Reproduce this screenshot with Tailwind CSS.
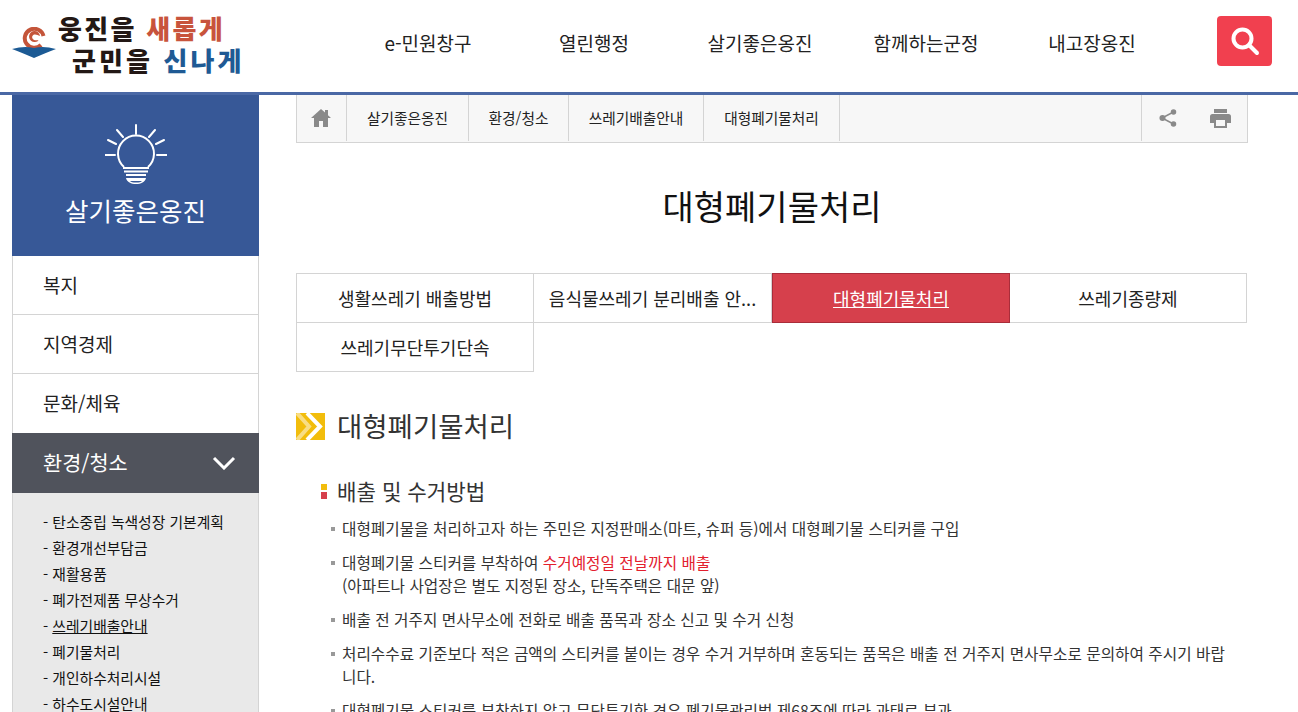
<!DOCTYPE html>
<html lang="ko">
<head>
<meta charset="utf-8">
<title>대형폐기물처리</title>
<script src="https://cdn.jsdelivr.net/npm/@tailwindcss/browser@4"></script>
</head>
<body class="h-[712px] overflow-hidden bg-white font-['Noto_Sans_CJK_KR','Noto_Sans',sans-serif] text-[#222]">

<!-- header -->
<header class="flex h-[95px] items-start border-b-[3px] border-[#4a68a5]">
  <a class="relative ml-[12px] block h-[92px] w-[240px] shrink-0">
    <svg class="absolute left-0 top-[27px]" width="44" height="32" viewBox="0 0 44 32">
      <path d="M29 18A9.500 9.500 0 1 1 31.500 9" fill="none" stroke="#c4553a" stroke-width="4"/>
      <path d="M28 9a5.500 5.500 0 1 0-5 6c2 0 3-1 3.500-2-2 .5-5 .5-6-1.500s.5-4 2.500-4 3 1 5 1.500z" fill="#c4553a"/>
      <path d="M0 22c8-2 14-3 22-1 8-2 14-1 22 1-8 3-15 6-22 9-7-3-14-6-22-9z" fill="#1c5a94"/>
    </svg>
    <div class="absolute left-[46px] top-[13px] whitespace-nowrap text-[26px] font-black leading-[30px] tracking-[2.300px] text-[#231815]">웅진을 <span class="text-[#c8543c]">새롭게</span></div>
    <div class="absolute left-[60px] top-[45px] whitespace-nowrap text-[26px] font-black leading-[30px] tracking-[3.100px] text-[#231815]">군민을 <span class="text-[#1f5a94]">신나게</span></div>
  </a>
  <nav class="ml-[93px] flex h-[87px] items-center text-[19px] text-[#222]">
    <a class="w-[166px] text-center">e-민원창구</a>
    <a class="w-[166px] text-center">열린행정</a>
    <a class="w-[166px] text-center">살기좋은옹진</a>
    <a class="w-[166px] text-center">함께하는군정</a>
    <a class="w-[166px] text-center">내고장옹진</a>
  </nav>
  <button class="ml-[42px] mt-[16px] flex h-[50px] w-[55px] items-center justify-center rounded-[4px] bg-[#f1404f]">
    <svg width="30" height="30" viewBox="0 0 30 30" fill="none" stroke="#fff" stroke-width="4"><circle cx="12.5" cy="12.5" r="9"/><path d="M19 19l8 8" stroke-linecap="round"/></svg>
  </button>
</header>

<div class="flex items-start">
  <!-- sidebar -->
  <aside class="ml-[12px] w-[247px] shrink-0">
    <div class="flex h-[161px] flex-col items-center bg-[#375897] pt-[28px] text-white">
      <svg width="62" height="62" viewBox="0 0 62 62" fill="none" stroke="#fff" stroke-width="2">
        <path d="M19 44a18 18 0 1 1 24 0"/>
        <path d="M31 2v9M12 7l6 7M50 7l-6 7M3 17l8 4M59 17l-8 4M0 32h10M52 32h10" stroke-linecap="round"/>
        <path d="M18 45h26M19 48.500h24"/>
        <path d="M21 52h20"/>
        <path d="M21 55h20c-1 4-5 6-10 6s-9-2-10-6z" fill="#fff" stroke="none"/>
        <path d="M25 58h12c-1 1-3 1.500-6 1.500s-5-.5-6-1.500z" fill="#375897" stroke="none"/>
      </svg>
      <div class="mt-[6px] text-[25.500px] leading-[38px]">살기좋은옹진</div>
    </div>
    <ul class="border-x border-[#d4d4d4] text-[19px] text-[#222]">
      <li class="flex h-[59px] items-center border-b border-[#d4d4d4] pl-[30px]">복지</li>
      <li class="flex h-[59px] items-center border-b border-[#d4d4d4] pl-[30px]">지역경제</li>
      <li class="flex h-[59px] items-center pl-[30px]">문화/체육</li>
    </ul>
    <div class="flex h-[60px] items-center justify-between bg-[#50535c] pl-[31px] pr-[23px] text-[20.800px] text-white">
      <span>환경/청소</span>
      <svg width="24" height="14" viewBox="0 0 24 14" fill="none" stroke="#fff" stroke-width="3"><path d="M2 2l10 10L22 2"/></svg>
    </div>
    <ul class="border-x border-[#d4d4d4] bg-[#e9e9e9] pl-[30px] pt-[16px] text-[14.800px] leading-[26px] text-[#111]">
      <li>- 탄소중립 녹색성장 기본계획</li>
      <li>- 환경개선부담금</li>
      <li>- 재활용품</li>
      <li>- 폐가전제품 무상수거</li>
      <li>- <span class="underline">쓰레기배출안내</span></li>
      <li>- 폐기물처리</li>
      <li>- 개인하수처리시설</li>
      <li>- 하수도시설안내</li>
    </ul>
  </aside>

  <!-- content -->
  <main class="ml-[37px] w-[952px] shrink-0">
    <div class="flex h-[48px] items-stretch border-x border-b border-[#d4d4d4] bg-[#f7f7f7] pb-[1px] text-[14.700px] text-[#222]">
      <a class="flex w-[50px] items-center justify-center border-r border-[#d4d4d4] pr-[2px]">
        <svg width="20" height="18" viewBox="0 0 20 18" fill="#8a8a8a"><path d="M10 0L0 9h3v9h5v-6h4v6h5V9h3l-3-2.700V1h-3v2.600z"/></svg>
      </a>
      <a class="flex w-[122px] items-center justify-center border-r border-[#d4d4d4]">살기좋은옹진</a>
      <a class="flex w-[100px] items-center justify-center border-r border-[#d4d4d4]">환경/청소</a>
      <a class="flex w-[135px] items-center justify-center border-r border-[#d4d4d4]">쓰레기배출안내</a>
      <a class="flex w-[136px] items-center justify-center border-r border-[#d4d4d4]">대형폐기물처리</a>
      <a class="ml-auto flex w-[53px] items-center justify-center border-l border-[#d4d4d4]">
        <svg width="18" height="18" viewBox="0 0 18 18" fill="#8a8a8a" stroke="#8a8a8a" stroke-width="1.500"><path d="M14.500 3L3 9l11.500 6" fill="none"/><circle cx="14.500" cy="3" r="2"/><circle cx="3.500" cy="9" r="2.300"/><circle cx="14.500" cy="15" r="2"/></svg>
      </a>
      <a class="flex w-[53px] items-center justify-center">
        <svg width="21" height="19" viewBox="0 0 21 19" fill="#8a8a8a"><path d="M4 0h13v4H4zM2.500 5h16A2.500 2.500 0 0 1 21 7.500V14h-4v5H4v-5H0V7.500A2.500 2.500 0 0 1 2.500 5zM6 11v6h9v-6z"/></svg>
      </a>
    </div>

    <h1 class="mt-[41px] h-[44px] text-center text-[34px] leading-[44px] text-[#111]">대형폐기물처리</h1>

    <div class="mt-[45px] grid w-[951px] grid-cols-[237px_238px_238px_237px] border-l border-t border-[#d4d4d4] text-[18px]">
      <a class="flex h-[49px] items-center justify-center border-b border-r border-[#d4d4d4]">생활쓰레기 배출방법</a>
      <a class="flex h-[49px] items-center justify-center whitespace-nowrap border-b border-r border-[#d4d4d4]">음식물쓰레기 분리배출 안...</a>
      <a class="-mt-px flex h-[50px] items-center justify-center border border-[#a92d3a] bg-[#d6404c] text-white underline">대형폐기물처리</a>
      <a class="flex h-[49px] items-center justify-center border-b border-r border-[#d4d4d4]">쓰레기종량제</a>
      <a class="flex h-[49px] items-center justify-center border-b border-r border-[#d4d4d4]">쓰레기무단투기단속</a>
    </div>

    <h2 class="mt-[32px] flex h-[44px] items-center text-[27.500px] text-[#333]">
      <svg class="mr-[12px] shrink-0" width="29" height="27" viewBox="0 0 29 27"><rect width="29" height="27" fill="#f2bd0c"/><path d="M1 0l12 13.500L1 27" fill="none" stroke="#f8dd84" stroke-width="4"/><path d="M11 0l13 13.500L11 27" fill="none" stroke="#fff" stroke-width="4"/></svg>
      대형폐기물처리
    </h2>

    <h3 class="mt-[27px] flex h-[32px] items-center pl-[25px] text-[21.200px] text-[#333]">
      <span class="mr-[10px] flex flex-col gap-[2px]"><i class="block h-[6px] w-[6px] bg-[#f2bd0c]"></i><i class="block h-[7px] w-[6px] bg-[#d6404c]"></i></span>
      배출 및 수거방법
    </h3>

    <ul class="mt-[10px] pl-[35px] pr-[13px] text-[15.700px] leading-[23px] text-[#333]">
      <li class="relative mb-[11px] pl-[11px] before:absolute before:left-0 before:top-[10px] before:h-[4px] before:w-[4px] before:bg-[#999]">대형폐기물을 처리하고자 하는 주민은 지정판매소(마트, 슈퍼 등)에서 대형폐기물 스티커를 구입</li>
      <li class="relative mb-[11px] pl-[11px] before:absolute before:left-0 before:top-[10px] before:h-[4px] before:w-[4px] before:bg-[#999]">대형폐기물 스티커를 부착하여 <span class="text-[#e3202e]">수거예정일 전날까지 배출</span><br>(아파트나 사업장은 별도 지정된 장소, 단독주택은 대문 앞)</li>
      <li class="relative mb-[11px] pl-[11px] before:absolute before:left-0 before:top-[10px] before:h-[4px] before:w-[4px] before:bg-[#999]">배출 전 거주지 면사무소에 전화로 배출 품목과 장소 신고 및 수거 신청</li>
      <li class="relative mb-[11px] pl-[11px] before:absolute before:left-0 before:top-[10px] before:h-[4px] before:w-[4px] before:bg-[#999]">처리수수료 기준보다 적은 금액의 스티커를 붙이는 경우 수거 거부하며 혼동되는 품목은 배출 전 거주지 면사무소로 문의하여 주시기 바랍니다.</li>
      <li class="relative mb-[11px] pl-[11px] before:absolute before:left-0 before:top-[10px] before:h-[4px] before:w-[4px] before:bg-[#999]">대형폐기물 스티커를 부착하지 않고 무단투기한 경우 폐기물관리법 제68조에 따라 과태료 부과</li>
    </ul>
  </main>
</div>
</body>
</html>
